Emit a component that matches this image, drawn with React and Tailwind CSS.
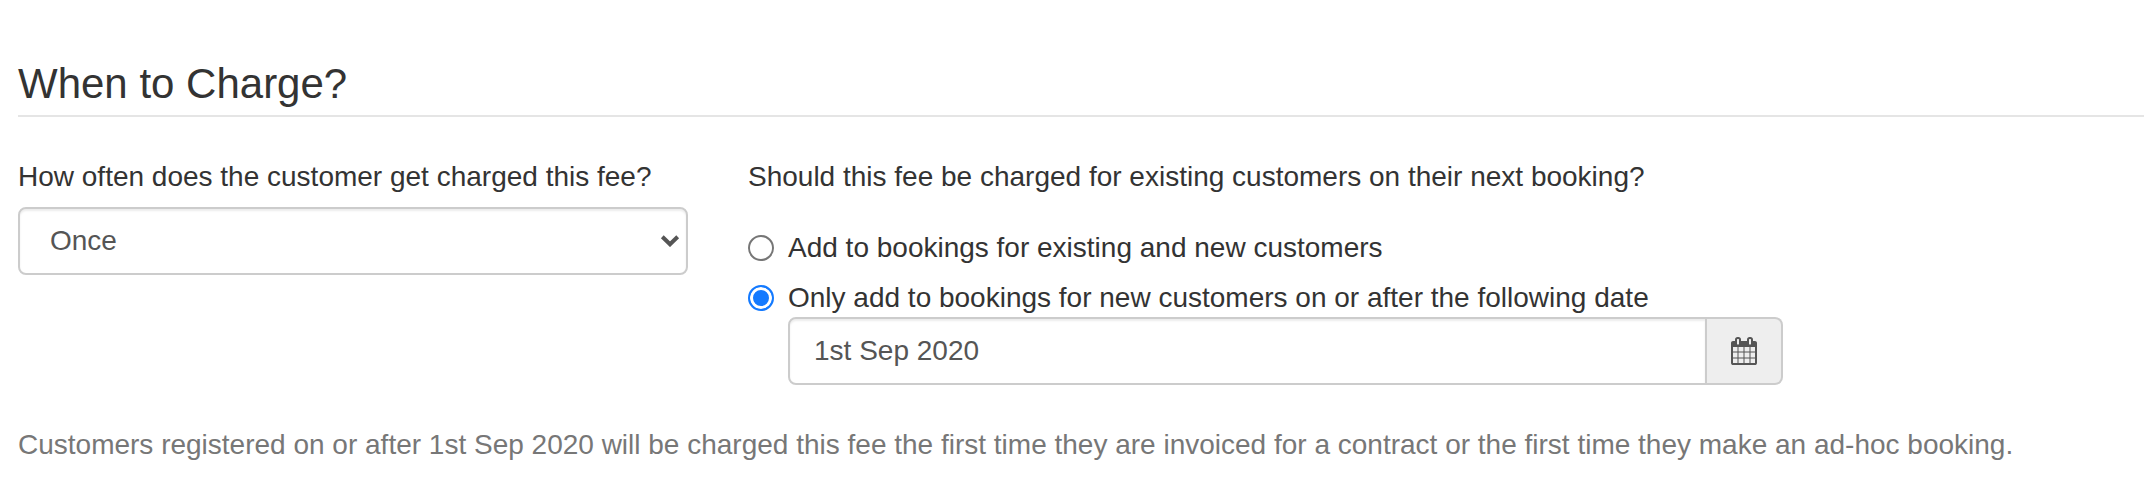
import { useState } from 'react';

function CalendarIcon({ className }) {
  return (
    <svg viewBox="0 0 1792 1792" fill="currentColor" aria-hidden="true" className={className}>
      <path d="M192 1664h288v-288h-288v288zm352 0h320v-288h-320v288zm-352-352h288v-320h-288v320zm352 0h320v-320h-320v320zm-352-384h288v-288h-288v288zm736 736h320v-288h-320v288zm-384-736h320v-288h-320v288zm768 736h288v-288h-288v288zm-384-352h320v-320h-320v320zm-352-864v-288q0-13-9.5-22.5t-22.5-9.5h-64q-13 0-22.5 9.5t-9.5 22.5v288q0 13 9.5 22.5t22.5 9.5h64q13 0 22.5-9.5t9.5-22.5zm736 864h288v-320h-288v320zm-384-384h320v-288h-320v288zm384 0h288v-288h-288v288zm32-480v-288q0-13-9.5-22.5t-22.5-9.5h-64q-13 0-22.5 9.5t-9.5 22.5v288q0 13 9.5 22.5t22.5 9.5h64q13 0 22.5-9.5t9.5-22.5zm384-64v1280q0 52-38 90t-90 38h-1408q-52 0-90-38t-38-90v-1280q0-52 38-90t90-38h128v-96q0-66 47-113t113-47h64q66 0 113 47t47 113v96h384v-96q0-66 47-113t113-47h64q66 0 113 47t47 113v96h128q52 0 90 38t38 90z" />
    </svg>
  );
}

function RadioOption({ value, selected, onSelect, children }) {
  return (
    <label className="flex items-center gap-3.5 leading-[50px]">
      <input
        type="radio"
        name="applies-to"
        value={value}
        checked={selected === value}
        onChange={() => onSelect(value)}
        className="appearance-none shrink-0 w-[26px] h-[26px] rounded-full border-2 border-[#767676] bg-white checked:border-[#147aff] checked:bg-[#147aff] checked:shadow-[inset_0_0_0_3px_#fff]"
      />
      {children}
    </label>
  );
}

export default function App() {
  const [frequency, setFrequency] = useState('once');
  const [appliesTo, setAppliesTo] = useState('new');
  const [startDate, setStartDate] = useState('1st Sep 2020');

  return (
    <main className="overflow-hidden bg-white pl-[18px] pt-14 pb-6 font-['Liberation_Sans',Arial,sans-serif] text-[28px] leading-10 text-[#333]">
      <h1 className="border-b-2 border-[#e5e5e5] pb-1 text-[42px] leading-[55px]">
        When to Charge?
      </h1>

      <form>
        <div className="-mr-1 mt-10 grid grid-cols-12 gap-x-[60px]">
          <div className="col-span-4">
            <label htmlFor="frequency" className="block whitespace-nowrap">
              How often does the customer get charged this fee?
            </label>
            <div className="relative mt-2.5">
              <select
                id="frequency"
                value={frequency}
                onChange={(e) => setFrequency(e.target.value)}
                className="appearance-none w-full h-[68px] rounded-lg border-2 border-[#ccc] bg-white pl-[30px] pr-12 text-[#555] shadow-[inset_0_2px_2px_rgba(0,0,0,0.075)]"
              >
                <option value="once">Once</option>
                <option value="booking">Every booking</option>
                <option value="yearly">Yearly</option>
              </select>
              <svg
                viewBox="0 0 20 12"
                fill="none"
                stroke="#555"
                strokeWidth="4"
                aria-hidden="true"
                className="pointer-events-none absolute right-2 top-7 w-5 h-3"
              >
                <path d="M2.3 1.8l7.7 7.5 7.7-7.5" />
              </svg>
            </div>
          </div>

          <fieldset className="col-span-6 min-w-0">
            <legend className="whitespace-nowrap">
              Should this fee be charged for existing customers on their next booking?
            </legend>
            <div className="mt-[26px]">
              <RadioOption value="all" selected={appliesTo} onSelect={setAppliesTo}>
                Add to bookings for existing and new customers
              </RadioOption>
              <RadioOption value="new" selected={appliesTo} onSelect={setAppliesTo}>
                Only add to bookings for new customers on or after the following date
              </RadioOption>
            </div>
            <div className="-mt-1.5 ml-10 flex h-[68px]">
              <input
                type="text"
                aria-label="Start date"
                value={startDate}
                onChange={(e) => setStartDate(e.target.value)}
                className="min-w-0 flex-1 rounded-l-lg border-2 border-[#ccc] bg-white px-6 text-[#555] shadow-[inset_0_2px_2px_rgba(0,0,0,0.075)]"
              />
              <button
                type="button"
                aria-label="Choose date"
                className="flex w-[76px] items-center justify-center rounded-r-lg border-2 border-l-0 border-[#ccc] bg-[#eee] text-[#555]"
              >
                <CalendarIcon className="w-7 h-7" />
              </button>
            </div>
          </fieldset>
        </div>
      </form>

      <p className="mt-10 text-[#777]">
        Customers registered on or after 1st Sep 2020 will be charged this fee the first time they
        are invoiced for a contract or the first time they make an ad-hoc booking.
      </p>
    </main>
  );
}
